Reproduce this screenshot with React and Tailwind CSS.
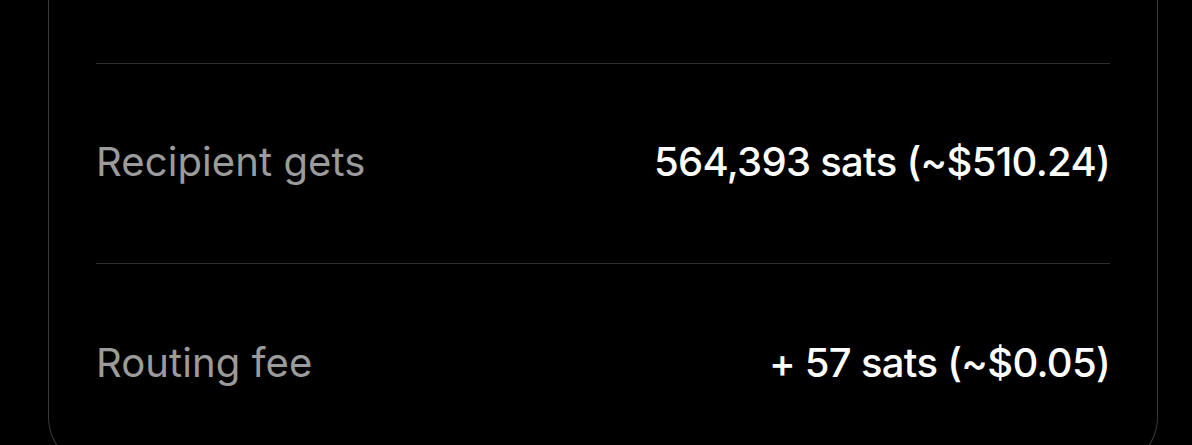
import React from "react";

const ROWS = [
  { label: "Recipient gets", value: "564,393 sats (~$510.24)" },
  { label: "Routing fee", value: "+ 57 sats (~$0.05)" },
];

export default function App() {
  return (
    <div className="h-[445px] w-[1192px] overflow-hidden bg-black font-['Inter',sans-serif] antialiased">
      <div className="ml-[48px] -mt-[40px] w-[1110px] rounded-b-[52px] border border-t-0 border-[#3a3a3a] px-[47px] pb-[4px]">
        {/* tail of the previous row */}
        <div className="h-[104px] border-b border-[#2e2e2e]"></div>

        {ROWS.map((row, i) => (
          <div
            key={row.label}
            className={
              "flex h-[200px] items-center justify-between pb-[3px] text-[40px] " +
              (i < ROWS.length - 1 ? "border-b border-[#2e2e2e]" : "")
            }
          >
            <span className="tracking-[0.1px] text-[#9b9b9b]">{row.label}</span>
            <span className="font-medium tracking-[-0.7px] text-white">
              {row.value}
            </span>
          </div>
        ))}
      </div>
    </div>
  );
}
